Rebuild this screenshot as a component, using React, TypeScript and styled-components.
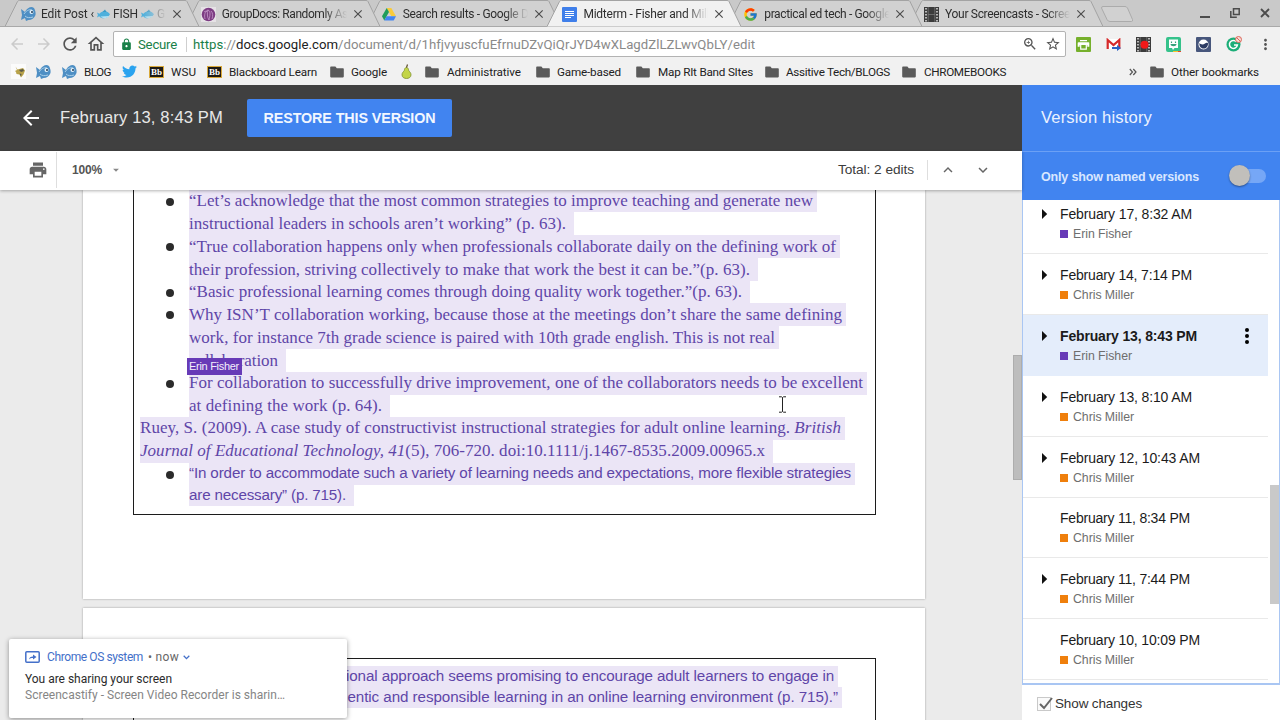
import React, { useLayoutEffect, useRef, useState } from "react";
import styled, { createGlobalStyle, css } from "styled-components";
import {
  MdArrowBack, MdArrowForward, MdRefresh, MdOutlineHome, MdLock, MdStarBorder,
  MdOutlineZoomIn, MdMoreVert, MdPrint, MdArrowDropDown, MdKeyboardArrowUp,
  MdKeyboardArrowDown, MdClose,
} from "react-icons/md";
import { FcGoogle } from "react-icons/fc";
import { FaTwitter } from "react-icons/fa";

const GlobalStyle = createGlobalStyle`
  * { box-sizing: border-box; }
  body {
    margin: 0;
    overflow: hidden;
    font-family: Roboto, "Liberation Sans", sans-serif;
    background: #ebebeb;
  }
  svg { display: block; flex: none; }
`;

/* Text set to an exact measure by adjusting its tracking */
const FitSpan = styled.span`
  display: inline-block;
  white-space: pre;
  flex: none;
`;
function Fit({ w, children }: { w: number; children: React.ReactNode }) {
  const ref = useRef<HTMLSpanElement>(null);
  const [spacing, setSpacing] = useState(0);
  useLayoutEffect(() => {
    const el = ref.current;
    if (!el) return;
    const count = (el.textContent || "").length;
    setSpacing((w - el.getBoundingClientRect().width) / count);
  }, []);
  return <FitSpan ref={ref} style={{ letterSpacing: `${spacing}px` }}>{children}</FitSpan>;
}

const Screen = styled.div`
  width: 1280px;
  height: 720px;
  display: flex;
  flex-direction: column;
  position: relative;
  overflow: hidden;
`;

/* ---------- browser frame ---------- */
const TabStrip = styled.div`
  height: 27px;
  flex: none;
  display: flex;
  background: #c9c9c9;
  box-shadow: inset 0 -1px #a9a9a9;
  padding-left: 5px;
`;
const Tab = styled.div<{ $z: number }>`
  position: relative;
  z-index: ${(p) => p.$z};
  width: 194px;
  margin-right: -13.2px;
  height: 27px;
  flex: none;
  display: flex;
  align-items: center;
  padding: 1px 0 0 15px;
`;
const TabShape = styled.svg`
  position: absolute;
  left: 0;
  top: 0;
  z-index: -1;
`;
const TabIcon = styled.span`
  width: 16px;
  flex: none;
  display: flex;
`;
const TabTitle = styled.div`
  width: 126px;
  margin-left: 5px;
  overflow: hidden;
  font-size: 12px;
  line-height: 16px;
  color: #2e2e2e;
  display: flex;
  align-items: center;
  mask-image: linear-gradient(to right, #000 102px, transparent 125px);
`;
const EmojiGap = styled.span`
  display: flex;
  margin: 0 3px 0 3px;
`;
const TabClose = styled(MdClose)`
  color: #4c4c4c;
  margin-left: 3px;
`;
const NewTab = styled.svg`
  margin: 6px 0 0 10px;
`;
const WindowButtons = styled.div`
  margin-left: auto;
  display: flex;
  align-items: center;
  gap: 20px;
  padding: 0 10px 1px 0;
  color: #4c4c4c;
`;

const NavBar = styled.div`
  height: 31px;
  flex: none;
  display: flex;
  align-items: center;
  background: #f1f1f1;
  padding: 4px 0 1px 8px;
  color: #555;
`;
const NavIcon = styled.span<{ $w: number; $dim?: boolean }>`
  width: ${(p) => p.$w}px;
  display: flex;
  flex: none;
  color: ${(p) => (p.$dim ? "#cbcbcb" : "#555")};
`;
const Omnibox = styled.div`
  width: 953px;
  flex: none;
  height: 26px;
  border: 1px solid #b3b3b3;
  border-radius: 2px;
  background: #fff;
  display: flex;
  align-items: center;
  padding: 0 4px 0 6px;
  font-size: 13.2px;
  color: #8a8a8a;
`;
const Secure = styled.span`
  display: flex;
  color: #188048;
  margin-left: 5px;
  padding-right: 9px;
  margin-right: 6px;
  border-right: 1px solid #cfcfcf;
  line-height: 15px;
`;
const Scheme = styled.span`color: #188048;`;
const Host = styled.span`color: #222;`;
const OmniActions = styled.div`
  margin-left: auto;
  display: flex;
  gap: 7px;
  color: #555;
`;
const Extensions = styled.div`
  display: flex;
  margin-left: 10px;
  gap: 15px;
  align-items: center;
`;

const BookmarkBar = styled.div`
  height: 27px;
  flex: none;
  display: flex;
  align-items: center;
  background: #f1f1f1;
  padding-left: 11px;
  font-size: 11.7px;
  color: #222;
`;
const Bookmark = styled.div<{ $w: number }>`
  width: ${(p) => p.$w}px;
  flex: none;
  display: flex;
  align-items: center;
`;
const BookmarkIcon = styled.span<{ $w: number }>`
  width: ${(p) => p.$w}px;
  flex: none;
  display: flex;
`;

/* ---------- version viewer ---------- */
const Main = styled.div`
  flex: 1;
  min-height: 0;
  display: flex;
`;
const Viewer = styled.div`
  width: 1022px;
  display: flex;
  flex-direction: column;
  font-family: "Liberation Sans", Arial, sans-serif;
`;
const VersionHeader = styled.div`
  height: 66px;
  flex: none;
  background: #404040;
  display: flex;
  align-items: center;
  padding-left: 19px;
  color: #e8e8e8;
  font-size: 16.6px;
`;
const VersionName = styled.div`
  width: 187px;
  margin-left: 17px;
`;
const RestoreButton = styled.button`
  width: 205px;
  height: 38px;
  border: 0;
  border-radius: 2px;
  background: #4184f0;
  color: #f2f7ff;
  font: bold 14.3px "Liberation Sans", Arial, sans-serif;
  padding: 0;
`;
const DocToolbar = styled.div`
  height: 39px;
  flex: none;
  position: relative;
  z-index: 2;
  background: #fff;
  box-shadow: 0 1px 3px rgba(0, 0, 0, 0.3);
  display: flex;
  align-items: center;
  padding-bottom: 2px;
  color: #3c3c3c;
  font-size: 13.7px;
`;
const PrintCell = styled.div`
  width: 57px;
  height: 36px;
  padding-left: 28px;
  display: flex;
  align-items: center;
  border-right: 1px solid #dedede;
  color: #666;
`;
const ZoomLevel = styled.div`
  display: flex;
  align-items: center;
  gap: 7px;
  padding-left: 15px;
  font: bold 12px "Liberation Sans", Arial, sans-serif;
  color: #555;
`;
const EditCount = styled.div`
  margin-left: auto;
  padding-right: 13px;
  border-right: 1px solid #dedede;
  line-height: 20px;
`;
const StepButtons = styled.div`
  display: flex;
  gap: 17px;
  padding: 0 30px 0 11px;
  color: #666;
`;
const DocArea = styled.div`
  flex: 1;
  min-height: 0;
  position: relative;
  overflow: hidden;
  display: flex;
  flex-direction: column;
  background: #ebebeb;
  padding-left: 83px;
`;
const Page = styled.div<{ $h: number; $top?: boolean }>`
  width: 842px;
  height: ${(p) => p.$h}px;
  flex: none;
  background: #fff;
  box-shadow: 0 0 2px rgba(0, 0, 0, 0.35);
  padding-left: 50px;
  ${(p) => p.$top && css`margin-top: 9px; padding-top: 50px;`}
`;
const Table = styled.div<{ $h: number; $top?: boolean }>`
  width: 743px;
  height: ${(p) => p.$h}px;
  border: 1px solid #1c1c1c;
  ${(p) => !p.$top && css`border-top: 0;`}
  ${(p) => p.$top && css`border-bottom: 0; padding-top: 7px;`}
  padding-left: 6px;
`;
const Line = styled.div<{ $h: number; $indent?: boolean }>`
  height: ${(p) => p.$h}px;
  padding-left: ${(p) => (p.$indent ? 49 : 0)}px;
  position: relative;
`;
const Highlight = styled.span<{ $h: number; $end: number; $start?: number; $sans?: boolean; $lift?: number }>`
  display: inline-flex;
  height: ${(p) => p.$h}px;
  align-items: center;
  vertical-align: top;
  padding: 0 ${(p) => p.$end}px ${(p) => p.$lift || 0}px ${(p) => p.$start || 0}px;
  background: #ebe5f6;
  color: #5f45a8;
  font-family: ${(p) => (p.$sans ? '"Liberation Sans", Arial, sans-serif' : '"Liberation Serif", "Times New Roman", serif')};
  font-size: ${(p) => (p.$sans ? 15.2 : 17)}px;
  line-height: 20px;
`;
const Bullet = styled.i`
  position: absolute;
  left: 26px;
  top: 7.5px;
  width: 8px;
  height: 8px;
  border-radius: 50%;
  background: #2b2b2b;
`;
const AuthorFlag = styled.div`
  position: absolute;
  z-index: 2;
  left: 47px;
  top: 9px;
  width: 55px;
  height: 17px;
  padding-left: 2px;
  background: #673ab7;
  color: #f4eefc;
  font-size: 11px;
  line-height: 17px;
`;
const DocThumb = styled.div`
  position: absolute;
  right: 0;
  top: 165px;
  width: 9px;
  height: 125px;
  background: #bdbdbd;
  border: 1px solid #adadad;
`;
const TextCursor = styled.svg`
  position: absolute;
  left: 778px;
  top: 206px;
`;

/* ---------- version history ---------- */
const Sidebar = styled.aside`
  width: 258px;
  display: flex;
  flex-direction: column;
  font-family: "Liberation Sans", Arial, sans-serif;
  background: #fff;
`;
const SideHeader = styled.div`
  height: 67px;
  flex: none;
  background: #4184f0;
  border-bottom: 1px solid #6ba0f5;
  color: #eaf2ff;
  font-size: 16.6px;
  display: flex;
  align-items: center;
  padding-left: 19px;
`;
const NamedOnly = styled.div`
  height: 48px;
  flex: none;
  background: #4184f0;
  color: #d9e7ff;
  font-size: 12.5px;
  font-weight: bold;
  display: flex;
  align-items: center;
  justify-content: space-between;
  padding: 1px 14px 0 19px;
`;
const Switch = styled.span`
  width: 36px;
  height: 14px;
  border-radius: 7px;
  background: #76a7f6;
  position: relative;
  margin-top: -1px;
  &::before {
    content: "";
    position: absolute;
    left: -1px;
    top: -4px;
    width: 21px;
    height: 21px;
    border-radius: 50%;
    background: #c1bfbb;
    box-shadow: 0 1px 2px rgba(0, 0, 0, 0.4);
  }
`;
const VersionList = styled.div`
  height: 485px;
  flex: none;
  border: 2px solid #a9c6f3;
  border-top: 0;
  border-right-width: 1px;
  border-left-width: 1px;
  position: relative;
  overflow: hidden;
`;
const ListThumb = styled.div`
  position: absolute;
  right: 0;
  top: 285px;
  width: 9px;
  height: 119px;
  background: #c9c9c9;
`;
const Version = styled.div<{ $h: number; $selected?: boolean }>`
  width: 245px;
  height: ${(p) => p.$h}px;
  background: ${(p) => (p.$selected ? "#e4edfb" : "#fff")};
  border-bottom: 1px solid ${(p) => (p.$selected ? "#e4edfb" : "#e9e9e9")};
  display: flex;
  align-items: flex-end;
  padding: 0 18px 10px 18px;
`;
const Expander = styled.div`
  width: 19px;
  height: 38px;
  padding-top: 3px;
`;
const VersionInfo = styled.div`
  display: flex;
  flex-direction: column;
  gap: 3px;
`;
const VersionDate = styled.div<{ $bold?: boolean }>`
  font-size: 14px;
  line-height: 18px;
  color: #1b1b1b;
  font-weight: ${(p) => (p.$bold ? "bold" : "normal")};
`;
const Author = styled.div<{ $color: string }>`
  display: flex;
  align-items: center;
  font-size: 12.3px;
  line-height: 17px;
  color: #6e6e6e;
  &::before {
    content: "";
    width: 8px;
    height: 8px;
    margin: -1px 5px 0 0;
    background: ${(p) => p.$color};
  }
`;
const MoreDots = styled.svg`
  margin-left: auto;
  align-self: flex-start;
  margin-top: 12px;
`;
const SideFooter = styled.div`
  flex: 1;
  display: flex;
  align-items: center;
  padding: 2px 0 0 15px;
  gap: 2px;
  font-size: 13.5px;
  color: #333;
`;

/* ---------- notification ---------- */
const Notification = styled.div`
  position: absolute;
  z-index: 5;
  left: 9px;
  top: 639px;
  width: 338px;
  height: 79px;
  border-radius: 2px;
  background: #fff;
  box-shadow: 0 1px 5px rgba(0, 0, 0, 0.4);
  padding: 10px 16px;
  display: flex;
  flex-direction: column;
  font-size: 12px;
  line-height: 16px;
`;
const NoticeSource = styled.div`
  display: flex;
  align-items: center;
  color: #4470c9;
  margin-bottom: 6px;
`;
const NoticeName = styled.span`
  margin-left: 7px;
`;
const NoticeTime = styled.span`
  color: #666;
  margin: 0 4px 0 5px;
`;
const NoticeTitle = styled.div`color: #2b2b2b;`;
const NoticeBody = styled.div`color: #858585;`;

/* ---------- drawings ---------- */
const Fish = ({ size = 16 }: { size?: number }) => (
  <svg width={size} height={size} viewBox="0 0 16 16">
    <path d="M1 3l4 3c1-3 4-5 7-5l2 1c1 2 2 4 1.500 7-1 3-4 5-7 5L6 15l-1-3-4 2 1-5z" fill="#4e8fc4" />
    <path d="M4 8c2-3 5-5 8-4M5 10c2 2 5 2 8 1" stroke="#a9cfe9" fill="none" />
    <circle cx="11.5" cy="6" r="2" fill="#e8f3fa" />
    <circle cx="12" cy="6" r="1" fill="#1e3c5a" />
  </svg>
);
const FishEmoji = () => (
  <svg width="13" height="11" viewBox="0 0 13 11">
    <path d="M0 3.500l2.500 1.300C4.500 1.500 10.500 1 13 5.300c-2.500 5-9 5-10.800 2L0 8.500l.9-2.500z" fill="#4fb0dc" />
    <path d="M3.500 7.500c2.500 2.500 6.500 2 8.800-.5z" fill="#b5e2f3" />
    <path d="M5.500 3l2.500-2.500 1.500 2.500z" fill="#3b9ac6" />
  </svg>
);
const Folder = () => (
  <svg width="14" height="12" viewBox="0 0 14 12">
    <path d="M1 0.5h4.400l1.400 1.700H13a.8.8 0 0 1 .8.8v7.600a.8.8 0 0 1-.8.8H1a.8.8 0 0 1-.8-.8V1.300A.8.8 0 0 1 1 .5z" fill="#5a5a5a" />
  </svg>
);
const BbIcon = () => (
  <svg width="15" height="12" viewBox="0 0 15 12">
    <rect x="0.5" y="0.5" width="14" height="11" fill="#1d1a14" stroke="#d9a93a" />
    <text x="7.500" y="9" textAnchor="middle" fontSize="9" fontWeight="bold" fontFamily="Liberation Serif, serif" fill="#fff">Bb</text>
  </svg>
);
const Viking = () => (
  <svg width="15" height="15" viewBox="0 0 15 15">
    <rect width="15" height="15" fill="#fbfbfb" />
    <path d="M4.500 2.500l2 3 5.500-1.500 2 2.500-1.500 4-2.500 3-1.500-3-3-.5-.5-2-1-1 2-1z" fill="#b8a24a" />
    <path d="M8 6l4-1 1 2-3 1zM8.500 9.500l2 .5-.5 2.500z" fill="#5a5a4a" />
  </svg>
);
const Pear = () => (
  <svg width="11" height="15" viewBox="0 0 11 15">
    <path d="M5.500 3.500c1.500 0 2 1.500 2.200 3 .8 1.200 2.300 2.200 2.300 4.300 0 2.400-2 3.700-4.500 3.700S1 13.200 1 10.800c0-2.100 1.500-3.100 2.300-4.300.2-1.500.7-3 2.200-3z" fill="#c3d548" stroke="#7c8f2a" strokeWidth=".8" />
    <path d="M5.500 3.500L6.500.5" stroke="#5c4a2a" strokeWidth="1.200" />
  </svg>
);
const Drive = () => (
  <svg width="14" height="13" viewBox="0 0 14 13">
    <path d="M4.700 0h4.600L14 8.300H9.300z" fill="#f9cb3c" />
    <path d="M4.700 0L7 4.100 2.300 12.500 0 8.300z" fill="#1f9d5c" />
    <path d="M4.600 8.300H14l-2.300 4.200H2.300z" fill="#4285f4" />
  </svg>
);
const DocsIcon = () => (
  <svg width="15" height="15" viewBox="0 0 15 15">
    <rect width="15" height="15" rx="1" fill="#3f7fea" />
    <path d="M3 4.500h9M3 6.500h9M3 8.500h9M3 10.500h6" stroke="#fff" />
  </svg>
);
const Swirl = () => (
  <svg width="15" height="15" viewBox="0 0 15 15">
    <rect width="15" height="15" fill="#e6e2e6" />
    <circle cx="7.500" cy="7.500" r="6.800" fill="#7d3c83" />
    <path d="M4 12c-1-4 0-8 3-9 3 1 2 6 1 10M7 3c-1 3-1 7 1 10M3 5c1-1 2-1 3 0M10 4c2 2 2 5 1 8" stroke="#c79acb" fill="none" strokeWidth=".8" />
  </svg>
);
const Film = ({ rec }: { rec?: boolean }) => (
  <svg width="15" height="15" viewBox="0 0 15 15">
    <rect width="15" height="15" fill="#3b3b3b" />
    <path d="M2 1v14M13 1v14" stroke="#d9d9d9" strokeWidth="1.600" strokeDasharray="1.600 1.400" />
    <path d="M4.200 7.500h6.600M4.200 0v15M10.800 0v15" stroke="#8a8a8a" strokeWidth=".6" />
    {rec && <circle cx="8.500" cy="7.800" r="4" fill="#f01818" />}
  </svg>
);
const PrintFriendly = () => (
  <svg width="15" height="15" viewBox="0 0 15 15">
    <rect width="15" height="15" rx="1" fill="#76b02c" />
    <path d="M4 3h7v1.300H4zM2.500 5.300h10a.8.8 0 0 1 .8.800v3.600h-2V8h-7.600v1.700h-2V6.100a.8.8 0 0 1 .8-.8z" fill="#fff" />
    <path d="M4.700 8v4.200h5.600V8" fill="none" stroke="#fff" strokeWidth="1.200" />
  </svg>
);
const MailChecker = () => (
  <svg width="15" height="13" viewBox="0 0 15 13">
    <rect x="1" y="1" width="13" height="10" fill="#fff" />
    <path d="M1.700 11V2l5.800 5 5.800-5v9" fill="none" stroke="#d6292a" strokeWidth="2.200" />
    <path d="M6 9h5V7l4 3-4 3v-2H6z" fill="#2d62c4" />
  </svg>
);
const Bitmoji = () => (
  <svg width="15" height="15" viewBox="0 0 15 15">
    <rect width="15" height="15" rx="2" fill="#35c28b" />
    <path d="M3 2.500h9v8.500H8.500L7 13l-1-2H3z" fill="#fff" />
    <path d="M5.500 4.500v1.500M9.500 4.500v1.500" stroke="#35a27b" strokeWidth="1.200" />
    <path d="M4.500 7h6c0 3-6 3-6 0z" fill="#35a27b" />
    <path d="M7 14.500h5" stroke="#f3c32f" /><path d="M12 14.500h3" stroke="#e8472f" />
  </svg>
);
const BlueBadge = () => (
  <svg width="15" height="15" viewBox="0 0 15 15">
    <rect width="15" height="15" rx="1" fill="#47567c" />
    <circle cx="7.500" cy="7.500" r="5" fill="#fff" />
    <path d="M3.500 6c1.500 2 4 1.500 5.500.5 1-.8 2-1 3-.3.300 3-1.800 5.300-4.500 5.300S3 9 3.500 6z" fill="#2d3c63" />
  </svg>
);
const GrammarBadge = () => (
  <svg width="16" height="16" viewBox="0 0 16 16">
    <circle cx="7.500" cy="8.500" r="7" fill="#1cae78" />
    <path d="M10.500 5.800A4 4 0 1 0 11.400 9H8" fill="none" stroke="#fff" strokeWidth="1.500" />
    <circle cx="12.500" cy="3.500" r="3" fill="#f6d9d4" stroke="#db6558" />
    <path d="M10.500 1.500l4 4" stroke="#db6558" />
  </svg>
);

const tabs = [
  { icon: <Fish />, title: <><Fit w={53}>Edit Post ‹</Fit><EmojiGap><FishEmoji /></EmojiGap><Fit w={25}>FISH</Fit><EmojiGap><FishEmoji /></EmojiGap>G</> },
  { icon: <Swirl />, title: <Fit w={126}>GroupDocs: Randomly As</Fit> },
  { icon: <Drive />, title: <Fit w={126}>Search results - Google D</Fit> },
  { icon: <DocsIcon />, title: <Fit w={126}>Midterm - Fisher and Mill</Fit>, active: true },
  { icon: <FcGoogle size={15} />, title: <Fit w={126}>practical ed tech - Google</Fit> },
  { icon: <Film />, title: <Fit w={125}>Your Screencasts - Scree</Fit> },
];

const bookmarks: { w: number; icon: React.ReactNode; iw?: number; label?: string; lw?: number }[] = [
  { w: 24, icon: <Viking /> },
  { w: 26, icon: <Fish /> },
  { w: 61, icon: <Fish />, iw: 23, label: "BLOG", lw: 27 },
  { w: 27, icon: <FaTwitter size={15} color="#2aa3ef" /> },
  { w: 58, icon: <BbIcon />, iw: 22, label: "WSU", lw: 25 },
  { w: 123, icon: <BbIcon />, iw: 22, label: "Blackboard Learn", lw: 88 },
  { w: 71, icon: <Folder />, iw: 21, label: "Google", lw: 36 },
  { w: 24, icon: <Pear /> },
  { w: 111, icon: <Folder />, iw: 22, label: "Administrative", lw: 74 },
  { w: 100, icon: <Folder />, iw: 21, label: "Game-based", lw: 64 },
  { w: 129, icon: <Folder />, iw: 22, label: "Map RIt Band SItes", lw: 95 },
  { w: 137, icon: <Folder />, iw: 21, label: "Assitive Tech/BLOGS", lw: 104 },
  { w: 227, icon: <Folder />, iw: 22, label: "CHROMEBOOKS", lw: 82 },
];

type DocLine = { h: number; w: number; text: React.ReactNode; end?: number; indent?: boolean; bullet?: boolean; sans?: boolean; flag?: boolean; lift?: number };
const lines: DocLine[] = [
  { h: 22, w: 624, text: "“Let’s acknowledge that the most common strategies to improve teaching and generate new", indent: true, bullet: true },
  { h: 23, w: 377, text: "instructional leaders in schools aren’t working” (p. 63).", end: 8, indent: true },
  { h: 23, w: 647, text: "“True collaboration happens only when professionals collaborate daily on the defining work of", indent: true, bullet: true },
  { h: 23, w: 561, text: "their profession, striving collectively to make that work the best it can be.”(p. 63).", end: 8, indent: true },
  { h: 22, w: 553, text: "“Basic professional learning comes through doing quality work together.”(p. 63).", end: 8, indent: true, bullet: true },
  { h: 23, w: 653, text: "Why ISN’T collaboration working, because those at the meetings don’t share the same defining", indent: true, bullet: true },
  { h: 23, w: 586, text: "work, for instance 7th grade science is paired with 10th grade english. This is not real", indent: true },
  { h: 23, w: 89, text: "collaboration", end: 8, indent: true, flag: true },
  { h: 23, w: 674, text: "For collaboration to successfully drive improvement, one of the collaborators needs to be excellent", indent: true, bullet: true, lift: 1 },
  { h: 22, w: 193, text: "at defining the work (p. 64).", end: 8, indent: true },
  { h: 23, w: 701, text: <>Ruey, S. (2009). A case study of constructivist instructional strategies for adult online learning. <em>British</em></>, lift: 1 },
  { h: 23, w: 625, text: <><em>Journal of Educational Technology, 41</em>(5), 706-720. doi:10.1111/j.1467-8535.2009.00965.x</>, end: 8, lift: 1 },
  { h: 22, w: 662, text: "“In order to accommodate such a variety of learning needs and expectations, more flexible strategies", indent: true, bullet: true, sans: true, lift: 2 },
  { h: 21, w: 157, text: "are necessary” (p. 715).", end: 8, indent: true, sans: true, lift: 1 },
];

const PURPLE = "#673ab7";
const ORANGE = "#ef7f0c";
const versions = [
  { h: 54, date: "February 17, 8:32 AM", w: 132, author: "Erin Fisher", open: true },
  { h: 61, date: "February 14, 7:14 PM", w: 132, author: "Chris Miller", open: true },
  { h: 61, date: "February 13, 8:43 PM", w: 137, author: "Erin Fisher", open: true, selected: true },
  { h: 61, date: "February 13, 8:10 AM", w: 132, author: "Chris Miller", open: true },
  { h: 61, date: "February 12, 10:43 AM", w: 140, author: "Chris Miller", open: true },
  { h: 60, date: "February 11, 8:34 PM", w: 130, author: "Chris Miller" },
  { h: 61, date: "February 11, 7:44 PM", w: 130, author: "Chris Miller", open: true },
  { h: 61, date: "February 10, 10:09 PM", w: 140, author: "Chris Miller" },
];

export default function App() {
  return (
    <Screen>
      <GlobalStyle />
      <TabStrip>
        {tabs.map((t, i) => (
          <Tab key={i} $z={t.active ? 10 : 8 - i}>
            <TabShape width="194" height="27" viewBox="0 0 194 27">
              <path d="M0 26.500L12.500 1.500Q13 .5 14.500 .5H180Q181.500 .5 182 1.500L194 26.500" fill={t.active ? "#f1f1f1" : "#d1d1d1"} stroke="#a3a3a3" />
              {!t.active && <path d="M0 26.500H194" stroke="#a9a9a9" />}
            </TabShape>
            <TabIcon>{t.icon}</TabIcon>
            <TabTitle>{t.title}</TabTitle>
            <TabClose size={14} />
          </Tab>
        ))}
        <NewTab width="34" height="17" viewBox="0 0 34 17">
          <path d="M3 .5H25Q26.500 .5 27.500 2L32.500 13.500Q33 15.500 31.500 15.500H10Q8 15.500 7 13.500L1.500 2Q1.500 .5 3 .5z" fill="#d1d1d1" stroke="#ababab" />
        </NewTab>
        <WindowButtons>
          <svg width="10" height="10" viewBox="0 0 10 10"><path d="M0 9h10" stroke="currentColor" strokeWidth="2" /></svg>
          <svg width="10" height="10" viewBox="0 0 10 10"><path d="M3.500 .8h5.700v5.700H3.500zM.8 3v6.200h6" fill="none" stroke="currentColor" strokeWidth="1.500" /></svg>
          <svg width="10" height="10" viewBox="0 0 10 10"><path d="M1 1l8 8M9 1l-8 8" stroke="currentColor" strokeWidth="1.800" /></svg>
        </WindowButtons>
      </TabStrip>

      <NavBar>
        <NavIcon $w={27} $dim><MdArrowBack size={18} /></NavIcon>
        <NavIcon $w={25} $dim><MdArrowForward size={18} /></NavIcon>
        <NavIcon $w={26}><MdRefresh size={20} /></NavIcon>
        <NavIcon $w={27}><MdOutlineHome size={20} /></NavIcon>
        <Omnibox>
          <MdLock size={13} color="#188048" />
          <Secure><Fit w={39}>Secure</Fit></Secure>
          <Fit w={562}><Scheme>https</Scheme>://<Host>docs.google.com</Host>/document/d/1hfjvyuscfuEfrnuDZvQiQrJYD4wXLagdZlLZLwvQbLY/edit</Fit>
          <OmniActions>
            <MdOutlineZoomIn size={16} />
            <MdStarBorder size={16} />
          </OmniActions>
        </Omnibox>
        <Extensions>
          <PrintFriendly /><MailChecker /><Film rec /><Bitmoji /><BlueBadge /><GrammarBadge />
          <MdMoreVert size={17} />
        </Extensions>
      </NavBar>

      <BookmarkBar>
        {bookmarks.map((b, i) => (
          <Bookmark key={i} $w={b.w}>
            <BookmarkIcon $w={b.iw || 16}>{b.icon}</BookmarkIcon>
            {b.label && <Fit w={b.lw!}>{b.label}</Fit>}
          </Bookmark>
        ))}
        <Bookmark $w={21}>
          <svg width="8" height="8" viewBox="0 0 8 8"><path d="M.8 1l2.700 3-2.700 3M4.300 1L7 4 4.300 7" fill="none" stroke="#555" strokeWidth="1.200" /></svg>
        </Bookmark>
        <Bookmark $w={120}>
          <BookmarkIcon $w={21}><Folder /></BookmarkIcon>
          <Fit w={88}>Other bookmarks</Fit>
        </Bookmark>
      </BookmarkBar>

      <Main>
        <Viewer>
          <VersionHeader>
            <MdArrowBack size={24} color="#fff" />
            <VersionName><Fit w={163}>February 13, 8:43 PM</Fit></VersionName>
            <RestoreButton><Fit w={172}>RESTORE THIS VERSION</Fit></RestoreButton>
          </VersionHeader>
          <DocToolbar>
            <PrintCell><MdPrint size={20} /></PrintCell>
            <ZoomLevel><Fit w={30}>100%</Fit><MdArrowDropDown size={14} color="#888" /></ZoomLevel>
            <EditCount><Fit w={76}>Total: 2 edits</Fit></EditCount>
            <StepButtons><MdKeyboardArrowUp size={18} /><MdKeyboardArrowDown size={18} /></StepButtons>
          </DocToolbar>
          <DocArea>
            <Page $h={409}>
              <Table $h={325}>
                {lines.map((l, i) => (
                  <Line key={i} $h={l.h} $indent={l.indent}>
                    {l.bullet && <Bullet />}
                    <Highlight $h={l.h} $end={l.end || 4} $sans={l.sans} $lift={l.lift}>
                      <Fit w={l.w}>{l.text}</Fit>
                    </Highlight>
                    {l.flag && <AuthorFlag><Fit w={50}>Erin Fisher</Fit></AuthorFlag>}
                  </Line>
                ))}
              </Table>
            </Page>
            <Page $h={300} $top>
              <Table $h={250} $top>
                <Line $h={21}>
                  <Highlight $h={21} $start={206} $end={4} $sans $lift={1}>
                    <Fit w={488}>ional approach seems promising to encourage adult learners to engage in</Fit>
                  </Highlight>
                </Line>
                <Line $h={21}>
                  <Highlight $h={21} $start={199} $end={4} $sans $lift={1}>
                    <Fit w={499}>hentic and responsible learning in an online learning environment (p. 715).”</Fit>
                  </Highlight>
                </Line>
              </Table>
            </Page>
            <TextCursor width="9" height="17" viewBox="0 0 9 17">
              <path d="M1 .8h2.500l1 .7 1-.7H8M4.500 1.500v14M1 16.200h2.500l1-.7 1 .7H8" fill="none" stroke="#222" />
            </TextCursor>
            <DocThumb />
          </DocArea>
        </Viewer>

        <Sidebar>
          <SideHeader><Fit w={111}>Version history</Fit></SideHeader>
          <NamedOnly><Fit w={158}>Only show named versions</Fit><Switch /></NamedOnly>
          <VersionList>
            {versions.map((v) => (
              <Version key={v.date} $h={v.h} $selected={v.selected}>
                <Expander>
                  {v.open && <svg width="12" height="12" viewBox="0 0 12 12"><path d="M1 1L6.200 6 1 11z" fill="#111" /></svg>}
                </Expander>
                <VersionInfo>
                  <VersionDate $bold={v.selected}><Fit w={v.w}>{v.date}</Fit></VersionDate>
                  <Author $color={v.author === "Erin Fisher" ? PURPLE : ORANGE}>
                    <Fit w={v.author === "Erin Fisher" ? 59 : 61}>{v.author}</Fit>
                  </Author>
                </VersionInfo>
                {v.selected && (
                  <MoreDots width="6" height="18" viewBox="0 0 6 18">
                    <circle cx="3" cy="3" r="2" /><circle cx="3" cy="9" r="2" /><circle cx="3" cy="15" r="2" />
                  </MoreDots>
                )}
              </Version>
            ))}
            <ListThumb />
          </VersionList>
          <SideFooter>
            <svg width="16" height="16" viewBox="0 0 16 16">
              <rect x=".5" y="1.500" width="13" height="13" fill="#fafafa" stroke="#c9c9c9" />
              <path d="M3 8l4 4 8-10" fill="none" stroke="#666" strokeWidth="2" />
            </svg>
            <Fit w={87}>Show changes</Fit>
          </SideFooter>
        </Sidebar>
      </Main>

      <Notification>
        <NoticeSource>
          <svg width="15" height="12" viewBox="0 0 15 12">
            <rect x=".8" y=".8" width="13.400" height="10.400" rx="1" fill="none" stroke="#4470c9" strokeWidth="1.500" />
            <path d="M4 8.500c.3-2 1.500-3 4-3V3.500L11.500 6 8 8.500v-1.500c-2 0-3 .3-4 1.500z" fill="#4470c9" />
          </svg>
          <NoticeName><Fit w={96}>Chrome OS system</Fit></NoticeName>
          <NoticeTime><Fit w={31}>• now</Fit></NoticeTime>
          <svg width="7" height="5" viewBox="0 0 7 5"><path d="M.7 .8l2.800 2.800L6.300 .8" fill="none" stroke="#4470c9" strokeWidth="1.300" /></svg>
        </NoticeSource>
        <NoticeTitle><Fit w={147}>You are sharing your screen</Fit></NoticeTitle>
        <NoticeBody><Fit w={260}>Screencastify - Screen Video Recorder is sharin…</Fit></NoticeBody>
      </Notification>
    </Screen>
  );
}
